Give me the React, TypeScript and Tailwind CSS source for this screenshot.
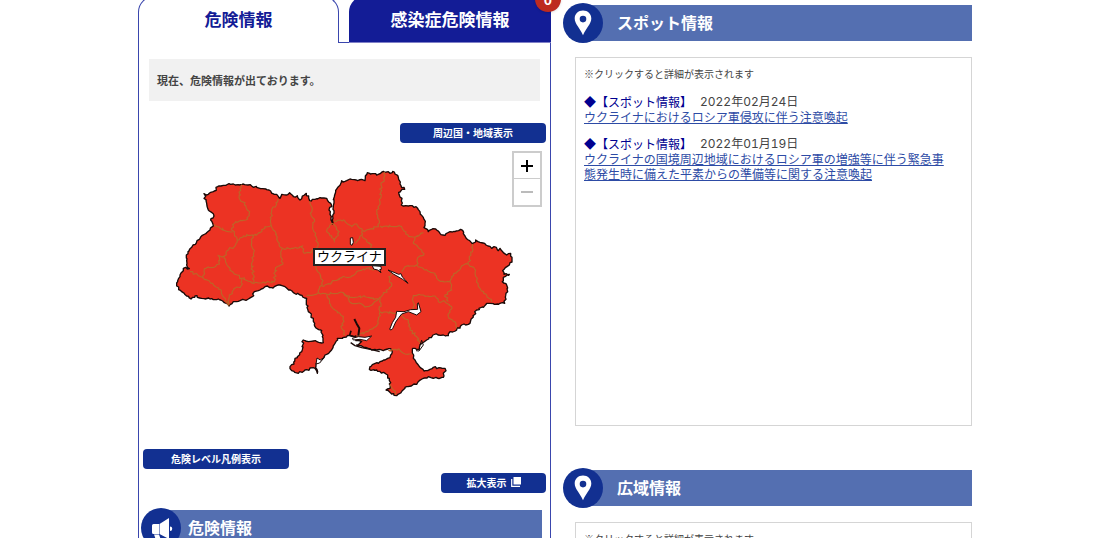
import type { ReactNode } from "react";

const COAST =
  "117,101 130,103 137,97 148,93 158,80 175,76 205,72 235,72 260,78 290,86 312,90 320,100 335,103 345,115 350,103 368,104 374,98 385,110 397,107 405,120 412,108 424,100 434,122 450,118 465,113 485,115 497,130 500,140 492,150 496,155 498,180 502,192 504,175 507,160 505,140 508,110 512,95 520,80 530,62 540,64 560,58 600,62 607,38 635,45 655,34 675,40 683,34 700,52 705,72 719,88 701,97 711,115 709,135 730,138 753,140 765,155 775,172 780,190 777,203 790,215 800,208 815,210 825,220 840,226 855,215 870,215 887,208 900,228 910,240 923,252 932,240 945,247 963,255 980,265 987,260 1000,272 1005,265 1013,275 1025,285 1037,280 1041,300 1033,315 1013,332 1017,343 1033,343 1020,350 1012,365 1025,375 1028,395 1021,412 1019,430 965,430 955,442 935,450 915,490 890,495 875,510 855,515 850,527 835,525 815,522 785,540 765,555 763,568 743,565 745,595 760,615 777,633 795,628 805,622 840,625 843,632 835,640 835,652 805,655 790,650 775,655 755,673 725,680 710,695 695,707 680,702 663,690 675,685 673,655 663,642 635,630 613,628 615,620 645,605 675,593 680,582 677,566 655,572 635,570 610,565 575,555 590,545 573,542 570,534 573,528 555,527 517,535 510,550 495,575 475,595 453,612 457,640 450,625 420,630 400,640 380,632 375,620 387,612 390,595 410,575 415,540 430,545 445,543 475,548 470,512 450,500 445,475 430,455 425,415 405,405 385,398 360,380 340,375 320,383 300,380 285,390 268,395 262,410 250,417 225,422 205,425 192,438 178,428 165,420 135,417 110,415 90,408 78,417 65,408 50,395 35,378 38,365 45,350 55,325 62,322 73,326 66,310 64,285 80,262 105,235 135,210 145,198 137,180 147,168 130,150 125,130 117,101";

const OBLASTS = [
  "230,74 222,97 228,124 240,128 244,145 254,155 243,180 212,185 200,205 208,222 217,240",
  "147,193 165,205 185,214 203,216",
  "340,117 320,155 318,195 300,200 285,218 263,228",
  "217,240 235,228 263,225 260,250 267,275 260,310 265,345 266,368",
  "318,195 325,210 337,232 342,255 352,265 347,290 353,313 332,323 328,365",
  "217,240 212,255 190,270 178,288 188,318 205,338 230,355 266,370 295,366 330,366",
  "178,288 160,287 163,312 150,320 118,326 113,352 75,335",
  "113,352 140,370 168,390 175,410 192,436",
  "230,355 228,378 205,390 193,410 192,436",
  "434,124 440,140 436,160 448,178 443,200 453,230 458,260 440,275 418,280 412,258 385,265 352,265",
  "452,318 458,335 474,362 460,398 425,407",
  "470,378 500,367 530,353 560,348 575,335 605,325 628,330",
  "460,398 485,402 535,398 560,412 600,410 640,420",
  "485,402 493,430 510,450 535,470 530,505 540,525",
  "535,398 560,430 590,432 605,440 625,430 645,412 680,378 672,350 690,335",
  "645,412 645,455 640,490 612,512 575,528",
  "507,182 535,180 560,200 575,192 592,210 590,225 570,250",
  "487,205 500,190 512,200 522,215 515,230 508,243 500,228 485,215 487,205",
  "592,212 612,208 640,200 642,180 635,150 645,125 648,75 658,60 660,36",
  "645,198 710,200 730,228 750,232 775,218",
  "590,225 605,245 620,255 622,275",
  "750,232 745,250 770,270 776,285 757,295 755,315 720,320 710,335",
  "755,315 780,330 810,340 820,360 855,365 860,390 840,405 850,425",
  "923,252 918,285 910,312 890,318 860,350 855,365",
  "910,312 932,330 935,360 945,385 965,405 980,426",
  "645,455 700,460 730,480 735,510 755,530 765,552",
  "745,455 745,407 775,405 810,408 820,425 840,425 860,440 850,470 870,485 875,505",
  "670,570 700,567 720,582 740,582",
  "675,672 685,690 692,704",
];

// splits every segment and nudges the new points so lines look surveyed, not ruled
function rough(points: string, amount: number) {
  const pts = points.split(" ").map((p) => p.split(",").map(Number));
  const out: string[] = [];
  let seed = 7;
  pts.forEach(([x, y], i) => {
    out.push(`${x},${y}`);
    if (i === pts.length - 1) return;
    const [nx, ny] = pts[i + 1];
    const steps = Math.max(1, Math.round(Math.hypot(nx - x, ny - y) / 6));
    for (let s = 1; s < steps; s++) {
      seed = (seed * 73 + 41) % 1009;
      const dx = (seed / 1009 - 0.5) * amount;
      seed = (seed * 73 + 41) % 1009;
      const dy = (seed / 1009 - 0.5) * amount;
      out.push(
        `${Math.round(x + ((nx - x) * s) / steps + dx)},${Math.round(y + ((ny - y) * s) / steps + dy)}`
      );
    }
  });
  return out.join(" ");
}

function UkraineMap() {
  return (
    <svg viewBox="0 0 1155 750" className="block w-[385px] max-w-none" aria-hidden="true">
      <polygon
        points={rough(COAST, 6)}
        fill="#ec3323"
        stroke="#1a0a08"
        strokeWidth="4"
        strokeLinejoin="round"
      />
      <g fill="none" stroke="#bd6428" strokeWidth="3.5">
        {OBLASTS.map((line) => (
          <polyline key={line} points={rough(line, 7)} />
        ))}
      </g>
      <g fill="#fff" stroke="#1a0a08" strokeWidth="3" strokeLinejoin="round">
        {/* reservoirs on the Dnieper */}
        <path d="M760 428l8 27-13 10-25-10-20 7-8 10-10 14-9 20-5 4-4-2 8-20 10-16 3-18 22 1 20-6 21-1-1-16z" />
        <path d="M669 330l18 7 14 6 7-2 4 10 8 8 9 11-16-12-14-8-14-8z" />
        <path d="M622 317l26 2 1 9-5 1 4 9-10-8-12-3z" />
        <path d="M556 234l7-1 2 14-4 9-5-3z" />
        {/* Dnieper-Bug estuary and the spits */}
        <path d="M562 535l18-5 20 2 20-4-15 14-20-4-20 2z" />
        <path d="M568 477l7 14 8 14-3 22" fill="none" strokeWidth="6" />
        <path d="M558 512l-4 14 12 4" fill="none" strokeWidth="5" />
        <path d="M557 548l13 9 20 6 30 6 24 6" fill="none" strokeWidth="4" />
        <path d="M453 612l3-18 10 6 12-8-14 17z" />
        <path d="M765 555l5-14 5 14-13 18-9-1" fill="none" />
      </g>
    </svg>
  );
}

function PinIcon() {
  return (
    <svg viewBox="0 0 20 28" className="h-7 w-5" aria-hidden="true">
      <path
        fill="#fff"
        fillRule="evenodd"
        d="M10 1.500C5.200 1.500 1.700 5 1.700 9.500c0 5.500 5 9 8.300 16.800 3.300-7.800 8.300-11.300 8.300-16.800 0-4.500-3.500-8-8.300-8zm0 5.300a3.300 3.300 0 1 1 0 6.600 3.300 3.300 0 0 1 0-6.600z"
      />
    </svg>
  );
}

function HornIcon() {
  return (
    <svg viewBox="0 0 24 24" className="size-6" fill="#fff" aria-hidden="true">
      <path d="M4.500 8H10v10H4.500A1.500 1.500 0 0 1 3 16.500v-7A1.500 1.500 0 0 1 4.500 8zM10.500 8L20 2v21l-9.500-5zM21 10.500a2.200 2.200 0 0 1 0 4.500zM5 18.500h5l2 5.500H7z" />
    </svg>
  );
}

function SectionTitle({
  icon,
  indent = "pl-[34px]",
  children,
}: {
  icon: ReactNode;
  indent?: string;
  children: ReactNode;
}) {
  return (
    <div className="flex h-10 items-center">
      <span className="z-10 -mr-5 flex size-10 shrink-0 items-center justify-center rounded-full bg-[#123091]">
        {icon}
      </span>
      <h2
        className={`flex h-9 flex-1 items-center bg-[#546fb1] pb-0.5 text-base font-bold text-white ${indent}`}
      >
        {children}
      </h2>
    </div>
  );
}

function SpotItem({ date, children }: { date: string; children: ReactNode }) {
  return (
    <li>
      <p className="flex h-[15px] items-center gap-2">
        <span className="text-[#000090]">◆【スポット情報】</span>
        <span className="font-['Inter','Noto_Sans_CJK_JP',sans-serif] tabular-nums">{date}</span>
      </p>
      <a href="#" className="text-[#2d4ba5] underline">
        {children}
      </a>
    </li>
  );
}

const smallButton =
  "flex h-5 items-center justify-center rounded bg-[#123091] pb-0.5 text-[10px] font-bold text-white";

export default function App() {
  return (
    <div className="h-screen overflow-hidden bg-white pr-2 font-['Noto_Sans_CJK_JP',sans-serif] text-[#444]">
      <main className="mx-auto grid h-full max-w-[834px] grid-cols-[413fr_409fr] gap-3">
        <section className="-mt-1 flex min-w-0 flex-col">
          <div className="flex h-[47px] text-[17px] font-bold">
            <button className="flex-1 rounded-t-2xl border border-b-0 border-[#3a46ad] pb-0.5 text-[#131c96]">
              危険情報
            </button>
            <span className="w-2.5 border-b border-[#3a46ad]" />
            <button className="relative w-[202px] rounded-t-2xl border-b border-[#8080c8] bg-[#131c96] text-white">
              感染症危険情報
              <span className="absolute -top-[10px] -right-[10px] flex size-[26px] items-center justify-center rounded-full bg-[#bd2a20] text-sm shadow">
                0
              </span>
            </button>
          </div>

          <div className="flex flex-1 flex-col border-x border-[#3a46ad] px-1 pt-4">
            <p className="mx-1.5 flex h-[42px] items-center bg-[#f1f1f1] px-2 text-[11px] font-bold">
              現在、危険情報が出ております。
            </p>
            <button className={`${smallButton} mt-[22px] w-[146px] self-end`}>
              周辺国・地域表示
            </button>

            <div className="relative mt-[17px] h-[289px] pl-[22px]">
              <UkraineMap />
              <span className="absolute top-[88px] left-[170px] border-2 border-[#222] bg-white px-0.5 font-['Liberation_Serif','Noto_Sans_CJK_JP',serif] text-[13px] leading-[14px] text-black">
                ウクライナ
              </span>
              <div className="absolute -top-[9px] right-1 flex w-[30px] flex-col border-2 border-[#ccc] bg-white">
                <button
                  aria-label="拡大"
                  className="flex h-[26px] items-center justify-center border-b border-[#ccc]"
                >
                  <svg viewBox="0 0 14 14" className="size-3.5" aria-hidden="true">
                    <path d="M7 1v12M1 7h12" stroke="#000" strokeWidth="2" />
                  </svg>
                </button>
                <button
                  aria-label="縮小"
                  disabled
                  className="flex h-[26px] items-center justify-center"
                >
                  <svg viewBox="0 0 14 14" className="size-3.5" aria-hidden="true">
                    <path d="M1 7h12" stroke="#bbb" strokeWidth="2" />
                  </svg>
                </button>
              </div>
            </div>

            <button className={`${smallButton} w-[146px]`}>危険レベル凡例表示</button>
            <button className={`${smallButton} mt-1 w-[105px] gap-1 self-end`}>
              拡大表示
              <svg viewBox="0 0 10 10" className="size-2.5" aria-hidden="true">
                <path d="M2.500 0H10v7.500H2.500z" fill="#fff" />
                <path d="M.7 2v7.300H9" fill="none" stroke="#fff" strokeWidth="1.200" />
              </svg>
            </button>

            <div className="mt-[15px] mr-1 -ml-0.5">
              <SectionTitle icon={<HornIcon />} indent="pl-[27px]">
                危険情報
              </SectionTitle>
            </div>
          </div>
        </section>

        <section className="min-w-0 pt-[3px]">
          <SectionTitle icon={<PinIcon />}>スポット情報</SectionTitle>
          <div className="mt-3.5 ml-3 h-[369px] border border-[#d5d5d5] px-2 pt-2">
            <p className="text-[10px] leading-4">※クリックすると詳細が表示されます</p>
            <ul className="mt-3 flex flex-col gap-3 pr-3 text-xs leading-[15px]">
              <SpotItem date="2022年02月24日">
                ウクライナにおけるロシア軍侵攻に伴う注意喚起
              </SpotItem>
              <SpotItem date="2022年01月19日">
                ウクライナの国境周辺地域におけるロシア軍の増強等に伴う緊急事態発生時に備えた平素からの準備等に関する注意喚起
              </SpotItem>
            </ul>
          </div>

          <div className="mt-[42px]">
            <SectionTitle icon={<PinIcon />}>広域情報</SectionTitle>
          </div>
          <div className="mt-3.5 ml-3 h-[369px] border border-[#d5d5d5] px-2 pt-2">
            <p className="text-[10px] leading-4">※クリックすると詳細が表示されます</p>
          </div>
        </section>
      </main>
    </div>
  );
}
